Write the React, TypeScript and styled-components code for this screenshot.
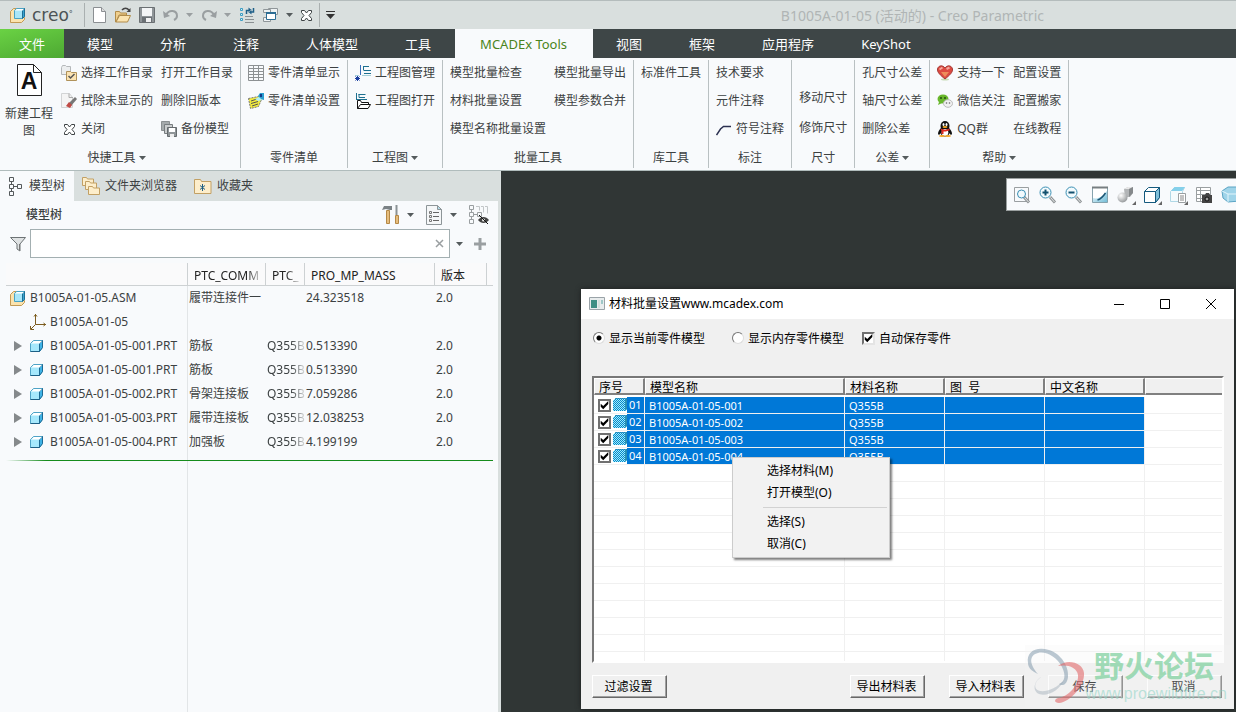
import React from "react";
import styled, { createGlobalStyle, css } from "styled-components";

const Global = createGlobalStyle`
  * { box-sizing: border-box; }
  body { margin: 0; }
  body, button, input, table {
    font-family: "Noto Sans", "Noto Sans CJK SC", sans-serif;
    font-size: 12px;
    line-height: 16px;
    color: #3c4142;
  }
  button { border: 0; padding: 0; background: none; cursor: pointer; white-space: nowrap; }
  svg { display: block; flex: none; }
`;

const Page = styled.div`
  display: flex;
  flex-direction: column;
  min-height: 100vh;
  overflow: hidden;
  background: #f8fafc;
`;

/* ---------- title bar ---------- */
const TitleBar = styled.header`
  display: flex;
  align-items: center;
  height: 29px;
  padding-left: 10px;
  border-top: 1px solid #b4bcbc;
  background: #d9dfde;
`;
const Brand = styled.div`
  display: flex;
  align-items: center;
  gap: 6px;
  width: 74px;
  font: 17px/20px "DejaVu Sans", sans-serif;
  color: #4c5355;
  & sup { margin-left: -6px; font-size: 8px; line-height: 16px; }
`;
const Rule = styled.span`
  width: 1px;
  height: 24px;
  background: #aab0b0;
`;
const QuickTools = styled.div`
  display: flex;
  align-items: center;
  gap: 8px;
  padding: 0 7px 0 6px;
`;
const IconButton = styled.button`
  display: flex;
  align-items: center;
  gap: 7px;
`;
const Title = styled.h1`
  margin: 1px 192px 0 auto;
  font-size: 14px;
  font-weight: 400;
  line-height: 18px;
  color: #b0b5b5;
  white-space: nowrap;
`;

/* ---------- ribbon ---------- */
const TabBar = styled.nav`
  display: flex;
  height: 29px;
  background: #3e4647;
`;
const RibbonTab = styled.button<{ $kind?: "file" | "active" }>`
  height: 29px;
  padding: 0 24px 0 23px;
  font-size: 13px;
  color: #fff;
  ${(p) => p.$kind === "file" && css`
    width: 64px;
    padding: 0;
    background: linear-gradient(165deg, #6ad244, #4da832);
  `}
  ${(p) => p.$kind === "active" && css`
    min-width: 138px;
    background: #f8fafc;
    color: #4a8420;
  `}
`;
const Ribbon = styled.section`
  display: flex;
  height: 113px;
  border-bottom: 1px solid #b0bcbc;
`;
const Group = styled.div<{ $flush?: boolean }>`
  display: flex;
  flex-direction: column;
  margin: 2px 0;
  padding: 0 7px 0 ${(p) => (p.$flush ? 0 : 7)}px;
  border-right: 1px solid #b9c0c2;
`;
const GroupBody = styled.div`
  display: flex;
  gap: 8px;
  height: 84px;
  margin-top: -1px;
`;
const Column = styled.div<{ $bottom?: boolean }>`
  display: flex;
  flex-direction: column;
  align-items: flex-start;
  justify-content: ${(p) => (p.$bottom ? "flex-end" : "flex-start")};
  & > button { height: ${(p) => (p.$bottom ? 30 : 28)}px; }
`;
const Command = styled.button`
  display: flex;
  align-items: center;
  gap: 4px;
`;
const BigCommand = styled.button`
  display: flex;
  flex-direction: column;
  align-items: center;
  gap: 9px;
  width: 58px;
  margin-right: -5px;
  padding: 5px 5px 0;
  line-height: 17px;
  white-space: normal;
`;
const GroupName = styled.div`
  display: flex;
  flex: 1;
  align-items: center;
  justify-content: center;
  gap: 3px;
  padding-top: 4px;
`;

/* ---------- model tree ---------- */
const Workspace = styled.main`
  display: flex;
  flex: 1;
`;
const TreePanel = styled.aside`
  display: flex;
  flex-direction: column;
  flex: 0 0 501px;
  border-right: 3px solid #d9dfde;
`;
const PanelTabs = styled.div`
  display: flex;
  height: 30px;
  background: #d9dfde;
`;
const PanelTab = styled.button<{ $active?: boolean }>`
  display: flex;
  align-items: center;
  gap: 5px;
  padding: 0 9px 0 8px;
  background: ${(p) => (p.$active ? "#f8fafc" : "transparent")};
`;
const PanelHead = styled.div`
  display: flex;
  align-items: center;
  height: 28px;
  padding: 0 9px 0 26px;
`;
const PanelTitle = styled.h2`
  flex: 1;
  margin: 0;
  font-size: 12px;
  font-weight: 500;
`;
const PanelTools = styled.div`
  display: flex;
  align-items: center;
  gap: 12px;
`;
const SearchRow = styled.div`
  display: flex;
  align-items: center;
  gap: 4px;
  padding: 0 12px 0 10px;
`;
const SearchBox = styled.div`
  display: flex;
  flex: 1;
  align-items: center;
  height: 29px;
  margin-right: 2px;
  padding-right: 5px;
  border: 1px solid #a3afb1;
  background: #fff;
  & input { flex: 1; min-width: 0; border: 0; outline: 0; background: none; }
`;
const SearchActions = styled.div`
  display: flex;
  align-items: center;
  gap: 11px;
`;
const TreeArea = styled.div`
  flex: 1;
  margin: 5px 5px 0 6px;
  background: linear-gradient(#e2e5e7, #e2e5e7) 181px 0 / 1px 100% no-repeat;
`;
const Tree = styled.table`
  width: 100%;
  table-layout: fixed;
  border-collapse: separate;
  border-spacing: 0;
  & th {
    height: 23px;
    padding: 4px 4px 0 6px;
    border-right: 1px solid #cdd1d3;
    border-bottom: 1px solid #cdd1d3;
    background: #fafafb;
    font-weight: 400;
    text-align: left;
    color: #222;
  }
  & th:last-child { border-right: 0; }
  & td { height: 24px; padding: 0 0 0 1px; white-space: nowrap; overflow: hidden; }
`;
const Fade = styled.div`
  overflow: hidden;
  mask-image: linear-gradient(to left, rgba(0, 0, 0, 0.15), #000 14px);
`;
const NodeCell = styled.div`
  display: flex;
  align-items: center;
  gap: 4px;
  padding-left: 3px;
`;
const Toggle = styled.button`
  display: flex;
  justify-content: center;
  width: 16px;
`;
const InsertLine = styled.div`
  height: 1px;
  margin-top: 6px;
  background: linear-gradient(to right, transparent, #168c1c 40px);
`;

/* ---------- graphics canvas ---------- */
const Canvas = styled.section`
  position: relative;
  display: flex;
  flex: 1;
  flex-direction: column;
  align-items: flex-end;
  min-width: 0;
  padding-top: 7px;
  background: #303635;
`;
const ViewBar = styled.div`
  display: flex;
  align-items: center;
  gap: 6px;
  width: 230px;
  height: 33px;
  padding-left: 5px;
  overflow: hidden;
  border: 1px solid #9aa0a0;
  border-right: 0;
  background: #f8fafc;
`;

/* ---------- dialog ---------- */
const Dialog = styled.div`
  position: absolute;
  top: 118px;
  right: 2px;
  bottom: 3px;
  left: 80px;
  display: flex;
  flex-direction: column;
  background: #f0f0f0;
  box-shadow: 0 0 5px #1c1f1f;
  color: #000;
  & button, & label, & table { color: #000; }
`;
const DialogTitle = styled.div`
  display: flex;
  align-items: center;
  gap: 4px;
  height: 30px;
  padding: 0 17px 0 8px;
  background: #fff;
  & strong { flex: 1; font-weight: 400; }
`;
const WindowButtons = styled.div`
  display: flex;
  gap: 34px;
`;
const DialogBody = styled.div`
  display: flex;
  flex: 1;
  flex-direction: column;
  padding: 9px 10px 11px 11px;
`;
const Options = styled.div`
  display: flex;
  align-items: center;
  gap: 27px;
  height: 20px;
  margin-bottom: 28px;
  padding-left: 1px;
`;
const Option = styled.label`
  display: flex;
  align-items: center;
  gap: 4px;
  & span { padding-top: 2px; }
`;
const Radio = styled.input`
  appearance: none;
  width: 12px;
  height: 12px;
  margin: 0;
  border: 1px solid;
  border-color: #777 #ddd #ddd #777;
  border-radius: 50%;
  background: #fff;
  &:checked { background: radial-gradient(circle, #000 2px, #fff 3px); }
`;
const Check = styled.input<{ $flat?: boolean }>`
  appearance: none;
  width: 13px;
  height: 13px;
  margin: 0 ${(p) => (p.$flat ? 2 : 0)}px 0 ${(p) => (p.$flat ? 0 : -9)}px;
  border: 2px solid;
  border-color: ${(p) => (p.$flat ? "#707070" : "#707070 #e4e4e4 #e4e4e4 #707070")};
  background: #fff;
  &:checked::before {
    content: "";
    display: block;
    width: 9px;
    height: 9px;
    background: #000;
    clip-path: polygon(8% 36%, 36% 60%, 92% 6%, 92% 40%, 36% 96%, 8% 70%);
  }
`;
const ListBox = styled.div`
  display: flex;
  flex: 1;
  flex-direction: column;
  border: 2px solid;
  border-color: #777 #fff #fff #777;
  background: #fff;
`;
const Parts = styled.table`
  width: 100%;
  table-layout: fixed;
  border-collapse: separate;
  border-spacing: 0;
  font-size: 11px;
  & th { height: 19px; padding: 0 0 2px; font-size: 12px; font-weight: 400; text-align: left; }
  & td {
    height: 17px;
    padding: 1px 4px 0;
    border-right: 1px solid #f0f0f0;
    border-bottom: 1px solid #f0f0f0;
    background: #0078d7;
    color: #fff;
    line-height: 14px;
    white-space: nowrap;
  }
  & td:first-child { padding: 0; background: #fff; }
  & td:last-child { border-right: 0; background: #fff; }
`;
const HeadCell = styled.div<{ $last?: boolean }>`
  height: 17px;
  padding-left: 4px;
  border: solid;
  border-width: 1px ${(p) => (p.$last ? 0 : 2)}px 2px 1px;
  border-color: #fff #808080 #808080 #fff;
  background: #f0f0f0;
  line-height: 17px;
  white-space: pre;
`;
const IndexCell = styled.div`
  display: flex;
  align-items: center;
  height: 16px;
  padding-left: 4px;
  & b { flex: 1; padding-left: 2px; background: #0078d7; font-weight: 400; line-height: 16px; }
`;
const GridFill = styled.div`
  flex: 1;
  background:
    linear-gradient(#f0f0f0, #f0f0f0) 50px 0 / 1px 100% no-repeat,
    linear-gradient(#f0f0f0, #f0f0f0) 250px 0 / 1px 100% no-repeat,
    linear-gradient(#f0f0f0, #f0f0f0) 350px 0 / 1px 100% no-repeat,
    linear-gradient(#f0f0f0, #f0f0f0) 450px 0 / 1px 100% no-repeat,
    linear-gradient(#f0f0f0, #f0f0f0) 550px 0 / 1px 100% no-repeat,
    repeating-linear-gradient(#fff 0 16px, #f0f0f0 16px 17px);
`;
const Actions = styled.div`
  display: flex;
  gap: 24px;
  margin-top: 12px;
  padding-right: 2px;
`;
const PushButton = styled.button<{ $left?: boolean }>`
  width: 75px;
  height: 23px;
  margin-right: ${(p) => (p.$left ? "auto" : 0)};
  padding-right: 2px;
  border: 1px solid;
  border-color: #fff #696969 #696969 #fff;
  background: #f0f0f0;
  box-shadow: inset -1px -1px #a0a0a0;
`;
const Menu = styled.div`
  position: absolute;
  top: 168px;
  left: 151px;
  display: flex;
  flex-direction: column;
  width: 158px;
  padding: 2px;
  border: 1px solid #ccc;
  background: #f2f2f2;
  box-shadow: 2px 2px 2px rgba(0, 0, 0, 0.5);
  & hr { width: 124px; height: 1px; margin: 3px 0 3px auto; border: 0; background: #d2d2d2; }
`;
const MenuItem = styled.button`
  height: 22px;
  padding-left: 32px;
  text-align: left;
`;
const Watermark = styled.div`
  position: absolute;
  right: 2px;
  bottom: 2px;
  display: flex;
  width: 207px;
  height: 62px;
  background: rgba(245, 246, 246, 0.3);
  pointer-events: none;
`;
const MarkText = styled.div`
  display: flex;
  flex: 1;
  flex-direction: column;
  align-items: flex-end;
  margin-left: -20px;
  padding-right: 5px;
  color: rgba(126, 208, 158, 0.72);
  font: 700 30px/38px "Noto Sans CJK SC", sans-serif;
  white-space: nowrap;
  & span:first-child { margin-right: 13px; }
  & span:last-child {
    color: rgba(150, 214, 200, 0.6);
    font: 16px/22px "Liberation Sans", sans-serif;
  }
`;

/* ---------- drawings ---------- */
type Kids = { children: React.ReactNode; w?: number; h?: number };
const Pic = ({ children, w = 16, h = 16 }: Kids) => (
  <svg width={w} height={h} viewBox={`0 0 ${w} ${h}`} fill="none" aria-hidden="true">{children}</svg>
);
const Caret = ({ c = "#555b5d" }: { c?: string }) => (
  <Pic w={7} h={4}><path d="M0 0h7L3.500 4z" fill={c} /></Pic>
);
const AsmIcon = () => (
  <Pic>
    <path d="M.5 4.500l3-3h4v9h7v2l-3 3h-11z" fill="#fbe3ae" stroke="#c29a55" />
    <path d="M4.500 3.500l2-2h8v8l-2 2h-8z" fill="#a9e6f8" stroke="#4aa3c4" />
    <path d="M12.500 3.500l2-2v8l-2 2z" fill="#3aa4d0" stroke="#1d6f96" />
    <path d="M5 3.500l2-1.500h7l-1.500 1.500z" fill="#fff" />
  </Pic>
);
const PartIcon = () => (
  <Pic w={14}>
    <path d="M.5 5.500l3-3h9v7l-3 4h-9z" fill="#a6e8fc" stroke="#4fa3c6" />
    <path d="M9.500 5.500l3-3v7l-3 4z" fill="#3fb3e6" stroke="#1d6a94" />
    <path d="M1 5.500l3-2.500h8l-2.500 2.500z" fill="#fff" />
    <path d="M.5 13.500h9" stroke="#1d5f85" />
  </Pic>
);
const NewIcon = () => (
  <Pic><path d="M2.500.5h8l4 4v11h-12z" fill="#fff" stroke="#8b8f92" /><path d="M10.500.5v4h4" fill="#ddd" stroke="#8b8f92" /></Pic>
);
const OpenIcon = () => (
  <Pic>
    <path d="M.5 4.500h4l1 1.500h6v2H4l-3 7H.5z" fill="#f0cf8d" stroke="#b18c4a" />
    <path d="M4.500 8.500h11l-3 6.500H1z" fill="#fbe4b0" stroke="#b18c4a" />
    <path d="M7 3c2-2.500 5-2.500 7 0" stroke="#444" strokeWidth="1.500" /><path d="M15.500 1v4h-4z" fill="#444" />
  </Pic>
);
const SaveIcon = () => (
  <Pic>
    <path d="M.5.5h15v15H.5z" fill="#8f9598" stroke="#6b7073" />
    <path d="M3 1h10v8H3z" fill="#f3f5f6" /><path d="M3 10h10v5H3z" fill="#6b7175" /><path d="M7 11h5v4H7z" fill="#f0f1f2" />
  </Pic>
);
const UndoIcon = ({ flip }: { flip?: boolean }) => (
  <Pic>
    <g transform={flip ? "matrix(-1 0 0 1 16 0)" : undefined}>
      <path d="M3 8c3-6 11-5 11 1 0 2-1 3-3 4" stroke="#9a9fa1" strokeWidth="2" />
      <path d="M0 4l1 7 6-2z" fill="#9a9fa1" />
    </g>
  </Pic>
);
const RegenIcon = () => (
  <Pic>
    <path d="M1.500 1.500h2v2h-2zM1.500 6.500h2v2h-2zM1.500 11.500h2v2h-2z" fill="#d8f2fb" stroke="#3b9cc2" />
    <path d="M6 9.500h8M6 12.500h9M6 15.500h9" stroke="#8a9093" />
    <path d="M7.500 7V3.500H10M14.500 1v4H12" stroke="#1e5f88" strokeWidth="1.500" />
    <path d="M9.500.5v5l3-2.500zM12.500 2.500v5l-3-2.500z" fill="#1e5f88" />
  </Pic>
);
const WindowsIcon = () => (
  <Pic>
    <path d="M5.500 1.500h9v6h-9z" fill="#eef2f3" stroke="#8f9699" />
    <path d="M.5 2.500h7v3h-7zM.5 10.500h7v4h-7z" fill="#eef2f3" stroke="#8f9699" />
    <path d="M3.500 5.500h9v7h-9z" fill="#fff" stroke="#2c6d94" /><path d="M3 6h10" stroke="#2c6d94" strokeWidth="2" />
  </Pic>
);
const CrossShape = () => (
  <path d="M.5.5h3l2 2.500 2-2.500h3v2L8 5.500l2.500 3v2h-3L5.500 8l-2 2.500h-3v-2L3 5.500.5 2.500z" fill="#fff" stroke="#3d4244" />
);
const CloseX = () => <Pic w={11} h={11}><CrossShape /></Pic>;
const SmallClose = () => <Pic><g transform="translate(3 3)"><CrossShape /></g></Pic>;
const DocA = () => (
  <Pic w={25} h={32}>
    <path d="M.5.5h16l8 8v23H.5z" fill="#fff" stroke="#222" />
    <path d="M16.500.5v8h8" stroke="#222" />
    <text x="12" y="25" textAnchor="middle" fontFamily="Liberation Sans" fontWeight="700" fontSize="23" fill="#111">A</text>
  </Pic>
);
const FolderCheck = () => (
  <Pic>
    <path d="M.5 2.500l1-2h3l1 1h4v8h-9z" fill="#eceeef" stroke="#b5b8ba" />
    <path d="M5.500 6.500h4l1 1h5v8h-10z" fill="#fbe3b2" stroke="#b0925a" /><path d="M7.500 11l2 2 4-4" stroke="#555" strokeWidth="1.500" />
  </Pic>
);
const Eraser = () => (
  <Pic>
    <path d="M.5.5h8l3 4v10H.5z" fill="#f4f4f4" stroke="#d2d4d5" /><path d="M8 .5v4h4" stroke="#aaa" />
    <path d="M14 4l2 2-6 7-3-2z" fill="#777" /><path d="M8 9l3 3-2 3-4-2z" fill="#c04a45" />
  </Pic>
);
const Backup = () => (
  <Pic>
    <path d="M.5.5h8v9h-8z" fill="#a5aaac" stroke="#8a8f91" /><path d="M3.500 3.500h8v9h-8z" fill="#c9cccd" stroke="#777c7f" />
    <path d="M6.500 6.500h9v9h-9z" fill="#8f9598" stroke="#666b6e" /><path d="M8 7h6v4H8z" fill="#fff" /><path d="M9 13h4v3H9z" fill="#eee" />
  </Pic>
);
const GridIcon = () => (
  <Pic><path d="M.5.5h15v15H.5zM.5 3.500h15M.5 6.500h15M.5 9.500h15M.5 12.500h15M5.500.5v15M10.500.5v15" stroke="#8d9193" /></Pic>
);
const ListSet = () => (
  <Pic>
    <path d="M.5 5.500l10-2 3 3-3 7-8 2z" fill="#f2ea3c" stroke="#777" strokeDasharray="2 1" />
    <path d="M3 8l6-2M3 10.500l7-2M4 13l6-2" stroke="#555" />
    <path d="M10 3l2-3h4v7l-4-1z" fill="#2a9fd0" /><path d="M12 1h2v3h-2z" fill="#123a86" /><path d="M7 6l4-2 3 3-4 1z" fill="#b3f0ee" />
  </Pic>
);
const DrawManage = () => (
  <Pic>
    <path d="M5.500 0v10" stroke="#3c6fb8" /><path d="M9 1.500h5M8.500 1v4.500M9 5.500h7M9 8.500h7" stroke="#1d7090" />
    <path d="M0 10.500h4M7 10.500h9" stroke="#a5cfd8" /><path d="M.5 11.500l4 4M4.500 11.500l-4 4M2.500 11v5M0 13.500h5" stroke="#1b3fa0" />
  </Pic>
);
const DrawOpen = () => (
  <Pic>
    <path d="M1.500 0v6M3.500 1.500h7M4 1v3.500h6M1 6.500h11" stroke="#1d7090" />
    <path d="M2.500 15.500V7.500h3l1 2h7v2M2.500 15.500l3-4h10l-2.500 4z" fill="#fff" stroke="#111" />
  </Pic>
);
const Leader = () => (
  <Pic><path d="M.5 14l4-6 3-2.500H15" stroke="#2b3050" strokeWidth="1.500" /></Pic>
);
const Heart = () => (
  <Pic>
    <ellipse cx="8" cy="14.500" rx="4" ry="1" fill="#c9dcb8" />
    <path d="M8 14C3 10 0 7 .5 4 1.500 0 6 0 8 3c2-3 6.500-3 7.500 1C16 7 13 10 8 14z" fill="#dc4a41" stroke="#a33a36" />
    <path d="M4 7h8l-4 5z" fill="#ee8d5b" /><path d="M2.500 4.500l3-2M9.500 4l3-1.500" stroke="#f5a79c" strokeWidth="2" />
  </Pic>
);
const WeChat = () => (
  <Pic>
    <ellipse cx="6" cy="6" rx="5.500" ry="4.500" fill="#69b72c" /><path d="M2 9l-1 3 4-2z" fill="#69b72c" />
    <circle cx="4" cy="5" r="1" fill="#264d12" /><circle cx="8" cy="5" r="1" fill="#264d12" />
    <ellipse cx="11" cy="10.500" rx="4.500" ry="3.800" fill="#f1f1f1" stroke="#bbb" />
    <circle cx="9.500" cy="10" r=".8" fill="#666" /><circle cx="12.500" cy="10" r=".8" fill="#666" />
  </Pic>
);
const Penguin = () => (
  <Pic>
    <ellipse cx="8" cy="5" rx="4.500" ry="5" fill="#111" />
    <path d="M4 7c-2 2-3 4-3 6l1 1 2-2h8l2 2 1-1c0-2-1-4-3-6z" fill="#111" />
    <ellipse cx="8" cy="11.500" rx="4.500" ry="4" fill="#111" /><ellipse cx="8" cy="11.500" rx="3.300" ry="3.500" fill="#fff" />
    <ellipse cx="6.500" cy="3.500" rx="1" ry="1.500" fill="#fff" /><ellipse cx="9.500" cy="3.500" rx="1" ry="1.500" fill="#fff" />
    <ellipse cx="8" cy="6" rx="2.500" ry="1" fill="#f5a623" /><path d="M3.500 7.500c3 1.500 6 1.500 9 0v2c-3 1-5 1-6 1V13H4.500v-3z" fill="#df2a20" />
    <ellipse cx="5" cy="15" rx="3" ry="1" fill="#f5a623" /><ellipse cx="11" cy="15" rx="3" ry="1" fill="#f5a623" />
  </Pic>
);
const TreeIcon = () => (
  <Pic h={20}>
    <path d="M1.500 1.500h4v4h-4zM1.500 8.500h4v4h-4zM1.500 15.500h4v4h-4zM9.500 8.500h4v4h-4zM3.500 5.500v3M3.500 12.500v3M5.500 10.500h4" stroke="#54595b" />
  </Pic>
);
const Folders = () => (
  <Pic w={18} h={20}>
    {[[0, 1], [3, 5], [6, 10]].map(([x, y]) => (
      <path key={x} transform={`translate(${x} ${y})`} d="M.5 8.500v-8h4l1 1.500h6v6.500z" fill="#fdeecb" stroke="#c2a064" />
    ))}
  </Pic>
);
const StarFolder = () => (
  <Pic w={18}>
    <path d="M.5 15.500V1.500h6l1 2h9.500v12z" fill="#fdeecb" stroke="#c2a064" />
    <path d="M8.500 6v7M6 7.500l5 4M11 7.500l-5 4" stroke="#1d5f85" />
  </Pic>
);
const Hammer = () => (
  <Pic w={18} h={20}>
    <path d="M4.500 5.500h3v13h-3z" fill="#e6bd7d" stroke="#b58845" /><path d="M0 5l2-4h8v4H8L4 4z" fill="#7b8285" />
    <path d="M14.500 0v10" stroke="#8b9295" strokeWidth="2" /><path d="M13.500 10.500h3v8h-3z" fill="#e6bd7d" stroke="#b58845" />
  </Pic>
);
const DocList = () => (
  <Pic w={17} h={20}>
    <path d="M.5.5h11l4 4v15H.5z" fill="#f5f7f8" stroke="#8d9598" /><path d="M11.500.5v4h4z" fill="#b4dcea" stroke="#8d9598" />
    <path d="M7 7.500h6M7 11.500h6M7 15.500h6" stroke="#666" /><path d="M3.500 6.500h2v2h-2zM3.500 10.500h2v2h-2zM3.500 14.500h2v2h-2z" stroke="#777" />
  </Pic>
);
const HideTree = () => (
  <Pic w={20} h={20}>
    <path d="M.5.5h4v4h-4zM.5 7.500h4v4h-4zM.5 14.500h4v4h-4zM8.500 7.500h4v4h-4zM2.500 5v2M2.500 12v2M5 9.500h3" stroke="#9a9fa1" />
    <path d="M7 1.500h3.500v4M12 1.500h2.500v6M16 1.500h2.500v7" stroke="#c2c6c8" />
    <path d="M9 15c3-4 8-4 11 0-3 4-8 4-11 0z" fill="#444" /><circle cx="14.500" cy="15" r="1.500" fill="#eee" /><path d="M10 10l9 9" stroke="#111" />
  </Pic>
);
const Funnel = () => (
  <Pic>
    <path d="M.5 1.500h15L10 8v7l-3-2V8z" fill="#dfe2e3" stroke="#6d7375" /><path d="M9 8h1v6H9z" fill="#777" />
  </Pic>
);
const AxisIcon = () => (
  <Pic><path d="M5.500 0v10.500H16M5.500 10.500L1 15M4 2.500l1.500-2 1.500 2M13.500 9l2 1.500-2 1.500M.5 12v3.500H4" stroke="#7d5c1f" /></Pic>
);
const Lens = ({ sign, box }: { sign?: "+" | "-"; box?: boolean }) => (
  <Pic w={20} h={20}>
    {box && <path d="M2.500 2.500h14v14h-14z" stroke="#9a9fa1" />}
    <path d="M12 12l5 5.500" stroke="#8f9496" strokeWidth="3" /><path d="M12.500 12.500l4 4.500" stroke="#e6e8e8" />
    <circle cx={box ? 9.5 : 7.5} cy={box ? 9 : 7.5} r={box ? 4 : 5.5} fill="#f2fafd" stroke="#3a8fb3" />
    {sign && <path d="M4.500 7.500h6" stroke="#12506f" strokeWidth="2" />}
    {sign === "+" && <path d="M7.500 4.500v6" stroke="#12506f" strokeWidth="2" />}
  </Pic>
);
const Flyout = () => <path d="M20 16v4h-4z" fill="#666" />;
const Repaint = () => (
  <Pic w={20} h={20}>
    <defs><linearGradient id="wipe" x1="0" y1="0" x2="1" y2="1"><stop offset=".3" stopColor="#d5eef6" /><stop offset="1" stopColor="#6fbbd6" /></linearGradient></defs>
    <path d="M2.500 2.500h15v15h-15z" fill="url(#wipe)" stroke="#86a3ae" /><path d="M3 3h14v3C14 9 10 15 3 13z" fill="#fff" /><path d="M7.500 15c4-1 6-4 8-7" stroke="#1b5574" strokeWidth="1.500" />
    <path d="M2 2.500h16" stroke="#777e81" strokeWidth="2" />
  </Pic>
);
const Shaded = () => (
  <Pic w={20} h={20}>
    <defs><radialGradient id="ball" cx=".35" cy=".3" r=".8"><stop offset="0" stopColor="#fff" /><stop offset="1" stopColor="#8b8f91" /></radialGradient></defs>
    <path d="M8 4l4-2h5v6l-3 4H9z" fill="#b2b5b7" /><path d="M8 4l4-2h5l-4 2z" fill="#e8e8e8" /><path d="M13 4l4-2v6l-4 4z" fill="#85898b" />
    <circle cx="6.500" cy="12.500" r="5" fill="url(#ball)" /><Flyout />
  </Pic>
);
const CubeView = () => (
  <Pic w={20} h={20}><path d="M2.500 6.500l4-4h11v10l-4 5h-11z" fill="#fff" stroke="#155a7e" /><path d="M13.500 6.500l4-4v10l-4 5z" fill="#7ebed8" stroke="#155a7e" /><path d="M2.500 6.500h11v11" stroke="#155a7e" /><Flyout /></Pic>
);
const Saved = () => (
  <Pic w={20} h={20}><path d="M2.500 6.500l4-4h10l-2 4v10h-12z" fill="#f4fbfd" stroke="#b0d8e6" /><path d="M3 6l3.500-4H17l-3 4z" fill="#85d0ea" /><path d="M10.500 8.500h7v9h-7z" fill="#fff" stroke="#9a9fa1" /><path d="M12 11h4M12 13h4M12 15h4" stroke="#888" /><Flyout /></Pic>
);
const Snapshot = () => (
  <Pic w={20} h={20}><path d="M2.500 2.500h14v14h-14zM2.500 5.500h14M2.500 9.500h14M2.500 13.500h14M6.500 2.500v14" fill="#fff" stroke="#9a9fa1" /><path d="M8 10h3l1-2h3l1 2h2v8H8z" fill="#444" /><circle cx="13" cy="14" r="2" fill="#999" stroke="#111" /></Pic>
);
const Perspective = () => (
  <Pic w={20} h={20}><path d="M2 6l6-4h12v14L8 17l-5-4z" fill="#9fd4e9" stroke="#5aa4c4" /><path d="M2 6l6 3h12M8 9v8" stroke="#e2f5fb" /></Pic>
);
const AppIcon = () => (
  <Pic><path d="M.5 1.500h15v12H.5z" fill="#e8eced" stroke="#9aa3a8" /><path d="M2 4h6v8H2z" fill="#3f8f84" /><path d="M9 4h2v8H9z" fill="#d5e0dd" /><path d="M12 4h2v4h-2z" fill="#9ec7c7" /></Pic>
);
const HatchCube = () => (
  <Pic w={14}>
    <defs>
      <pattern id="hatch" width="2" height="2" patternUnits="userSpaceOnUse">
        <path d="M0 0h2v2H0z" fill="#9df0fa" /><path d="M0 0h1v1H0zM1 1h1v1H1z" fill="#0a84cc" />
      </pattern>
    </defs>
    <path d="M0 3l2-2h12v11l-2 2H0z" fill="url(#hatch)" shapeRendering="crispEdges" />
    <path d="M12 3l2-2v11l-2 2z" fill="#2a90b0" /><path d="M2 1.500h12" stroke="#4a9fb8" strokeDasharray="1 1" />
  </Pic>
);
const Logo = () => (
  <Pic w={74} h={62}>
    <path fillRule="evenodd" fill="rgba(120,145,165,.5)" d="M3 18C1 6 12 1 24 5c12 4 20 16 19 27-1 9-7 9-9 7 6-2 7-9 3-17C32 12 21 6 13 8 4 10 4 19 13 29 6 26 3 22 3 18z" />
    <path fillRule="evenodd" fill="rgba(226,100,102,.58)" d="M33 21c10-8 25-3 26 7 1 13-14 29-25 30-5 0-5-4-1-5 10-1 21-13 20-23-1-8-11-11-20-9z" />
    <path fill="rgba(150,165,178,.4)" d="M18 31c-8 4-11 13-3 15 7 1 17-3 24-11-4 10-16 17-25 14-8-4-4-15 4-18z" />
  </Pic>
);

/* ---------- data ---------- */
const tabs = ["模型", "分析", "注释", "人体模型", "工具", "MCADEx Tools", "视图", "框架", "应用程序", "KeyShot"];

type Cmd = [string, (() => React.ReactElement)?];
type GroupData = { name: string; more?: boolean; bottom?: boolean; cols: Cmd[][] };
const groups: GroupData[] = [
  { name: "快捷工具", more: true, cols: [
    [["选择工作目录", FolderCheck], ["拭除未显示的", Eraser], ["关闭", SmallClose]],
    [["打开工作目录"], ["删除旧版本"], ["备份模型", Backup]],
  ] },
  { name: "零件清单", cols: [[["零件清单显示", GridIcon], ["零件清单设置", ListSet]]] },
  { name: "工程图", more: true, cols: [[["工程图管理", DrawManage], ["工程图打开", DrawOpen]]] },
  { name: "批量工具", cols: [[["模型批量检查"], ["材料批量设置"], ["模型名称批量设置"]], [["模型批量导出"], ["模型参数合并"]]] },
  { name: "库工具", cols: [[["标准件工具"]]] },
  { name: "标注", cols: [[["技术要求"], ["元件注释"], ["符号注释", Leader]]] },
  { name: "尺寸", bottom: true, cols: [[["移动尺寸"], ["修饰尺寸"]]] },
  { name: "公差", more: true, cols: [[["孔尺寸公差"], ["轴尺寸公差"], ["删除公差"]]] },
  { name: "帮助", more: true, cols: [
    [["支持一下", Heart], ["微信关注", WeChat], ["QQ群", Penguin]],
    [["配置设置"], ["配置搬家"], ["在线教程"]],
  ] },
];

const nodes = [
  ["asm", "B1005A-01-05.ASM", "履带连接件一", "", "24.323518", "2.0"],
  ["csys", "B1005A-01-05", "", "", "", ""],
  ["prt", "B1005A-01-05-001.PRT", "筋板", "Q355B", "0.513390", "2.0"],
  ["prt", "B1005A-01-05-001.PRT", "筋板", "Q355B", "0.513390", "2.0"],
  ["prt", "B1005A-01-05-002.PRT", "骨架连接板", "Q355B", "7.059286", "2.0"],
  ["prt", "B1005A-01-05-003.PRT", "履带连接板", "Q355B", "12.038253", "2.0"],
  ["prt", "B1005A-01-05-004.PRT", "加强板", "Q355B", "4.199199", "2.0"],
];

const NodeIcon = styled.span`
  display: flex;
  width: 16px;
`;
const TreeNode = ({ kind, label }: { kind: string; label: string }) => (
  <NodeCell>
    {kind === "prt" && (
      <Toggle aria-label={`展开 ${label}`}><Pic w={8} h={10}><path d="M0 0l8 5-8 5z" fill="#85898b" /></Pic></Toggle>
    )}
    {kind === "csys" && <Toggle as="span" />}
    <NodeIcon>{kind === "asm" ? <AsmIcon /> : kind === "csys" ? <AxisIcon /> : <PartIcon />}</NodeIcon>
    {label}
  </NodeCell>
);

const MaterialDialog = () => (
  <Dialog role="dialog" aria-labelledby="dialog-title">
    <DialogTitle>
      <AppIcon />
      <strong id="dialog-title">材料批量设置www.mcadex.com</strong>
      <WindowButtons>
        <IconButton aria-label="最小化"><Pic w={12} h={12}><path d="M1 6.500h10" stroke="#000" /></Pic></IconButton>
        <IconButton aria-label="最大化"><Pic w={12} h={12}><path d="M1.500 1.500h9v9h-9z" stroke="#000" /></Pic></IconButton>
        <IconButton aria-label="关闭"><Pic w={12} h={12}><path d="M1 1l10 10M11 1L1 11" stroke="#000" /></Pic></IconButton>
      </WindowButtons>
    </DialogTitle>
    <DialogBody>
      <Options>
        <Option><Radio type="radio" name="scope" defaultChecked /><span>显示当前零件模型</span></Option>
        <Option><Radio type="radio" name="scope" /><span>显示内存零件模型</span></Option>
        <Option><Check type="checkbox" defaultChecked /><span>自动保存零件</span></Option>
      </Options>
      <ListBox>
        <Parts>
          <colgroup>
            <col style={{ width: 51 }} /><col style={{ width: 200 }} /><col style={{ width: 100 }} />
            <col style={{ width: 100 }} /><col style={{ width: 100 }} /><col />
          </colgroup>
          <thead>
            <tr>
              {["序号", "模型名称", "材料名称", "图  号", "中文名称"].map((h) => <th key={h}><HeadCell>{h}</HeadCell></th>)}
              <th><HeadCell $last /></th>
            </tr>
          </thead>
          <tbody>
            {["01", "02", "03", "04"].map((n) => (
              <tr key={n}>
                <td>
                  <IndexCell>
                    <Check $flat type="checkbox" defaultChecked aria-label={n} />
                    <HatchCube />
                    <b>{n}</b>
                  </IndexCell>
                </td>
                <td>B1005A-01-05-0{n}</td><td>Q355B</td><td /><td /><td />
              </tr>
            ))}
          </tbody>
        </Parts>
        <GridFill />
      </ListBox>
      <Actions>
        <PushButton $left>过滤设置</PushButton>
        <PushButton>导出材料表</PushButton>
        <PushButton>导入材料表</PushButton>
        <PushButton>保存</PushButton>
        <PushButton>取消</PushButton>
      </Actions>
    </DialogBody>
    <Watermark><Logo /><MarkText><span>野火论坛</span><span>www.proewildfire.cn</span></MarkText></Watermark>
    <Menu role="menu">
      <MenuItem role="menuitem">选择材料(M)</MenuItem>
      <MenuItem role="menuitem">打开模型(O)</MenuItem>
      <hr />
      <MenuItem role="menuitem">选择(S)</MenuItem>
      <MenuItem role="menuitem">取消(C)</MenuItem>
    </Menu>
  </Dialog>
);

export default function App() {
  return (
    <Page>
      <Global />
      <TitleBar>
        <Brand><AsmIcon /><span>creo</span><sup>°</sup></Brand>
        <Rule />
        <QuickTools>
          <IconButton aria-label="新建"><NewIcon /></IconButton>
          <IconButton aria-label="打开"><OpenIcon /></IconButton>
          <IconButton aria-label="保存"><SaveIcon /></IconButton>
          <IconButton aria-label="撤销"><UndoIcon /><Caret c="#9a9fa1" /></IconButton>
          <IconButton aria-label="重做"><UndoIcon flip /><Caret c="#9a9fa1" /></IconButton>
          <IconButton aria-label="重新生成"><RegenIcon /></IconButton>
          <IconButton aria-label="窗口"><WindowsIcon /><Caret /></IconButton>
          <IconButton aria-label="关闭"><CloseX /></IconButton>
        </QuickTools>
        <Rule />
        <QuickTools>
          <IconButton aria-label="自定义"><Pic w={9} h={8}><path d="M0 .5h9" stroke="#333" /><path d="M0 3h9L4.500 8z" fill="#333" /></Pic></IconButton>
        </QuickTools>
        <Title>B1005A-01-05 (活动的) - Creo Parametric</Title>
      </TitleBar>
      <TabBar>
        <RibbonTab $kind="file">文件</RibbonTab>
        {tabs.map((t) => <RibbonTab key={t} $kind={t === "MCADEx Tools" ? "active" : undefined}>{t}</RibbonTab>)}
      </TabBar>
      <Ribbon>
        {groups.map((g, i) => (
          <Group key={g.name} $flush={i === 0}>
            <GroupBody>
              {i === 0 && <BigCommand><DocA />新建工程图</BigCommand>}
              {g.cols.map((col, c) => (
                <Column key={c} $bottom={g.bottom}>
                  {col.map(([label, Icon]) => <Command key={label}>{Icon && <Icon />}{label}</Command>)}
                </Column>
              ))}
            </GroupBody>
            <GroupName>{g.name}{g.more && <Caret />}</GroupName>
          </Group>
        ))}
      </Ribbon>
      <Workspace>
        <TreePanel>
          <PanelTabs>
            <PanelTab $active><TreeIcon />模型树</PanelTab>
            <PanelTab><Folders />文件夹浏览器</PanelTab>
            <PanelTab><StarFolder />收藏夹</PanelTab>
          </PanelTabs>
          <PanelHead>
            <PanelTitle>模型树</PanelTitle>
            <PanelTools>
              <IconButton aria-label="设置"><Hammer /><Caret /></IconButton>
              <IconButton aria-label="显示"><DocList /><Caret /></IconButton>
              <IconButton aria-label="隐藏"><HideTree /></IconButton>
            </PanelTools>
          </PanelHead>
          <SearchRow>
            <Funnel />
            <SearchBox>
              <input type="text" aria-label="搜索模型树" />
              <IconButton aria-label="清除"><Pic w={9} h={9}><path d="M1 1l7 7M8 1L1 8" stroke="#9a9fa1" strokeWidth="1.500" /></Pic></IconButton>
            </SearchBox>
            <SearchActions>
              <IconButton aria-label="搜索选项"><Caret /></IconButton>
              <IconButton aria-label="添加"><Pic w={12} h={12}><path d="M6 0v12M0 6h12" stroke="#9a9fa1" strokeWidth="3" /></Pic></IconButton>
            </SearchActions>
          </SearchRow>
          <TreeArea>
            <Tree>
              <colgroup>
                <col style={{ width: 182 }} /><col style={{ width: 78 }} /><col style={{ width: 39 }} />
                <col style={{ width: 130 }} /><col style={{ width: 52 }} /><col />
              </colgroup>
              <thead>
                <tr>
                  <th /><th><Fade>PTC_COMM</Fade></th><th><Fade>PTC_</Fade></th><th>PRO_MP_MASS</th><th>版本</th><th />
                </tr>
              </thead>
              <tbody>
                {nodes.map(([kind, label, name, mat, mass, ver], i) => (
                  <tr key={i}>
                    <td><TreeNode kind={kind} label={label} /></td>
                    <td>{name}</td><td><Fade>{mat}</Fade></td><td>{mass}</td><td>{ver}</td><td />
                  </tr>
                ))}
              </tbody>
            </Tree>
            <InsertLine />
          </TreeArea>
        </TreePanel>
        <Canvas>
          <ViewBar>
            <IconButton aria-label="重新调整"><Lens box /></IconButton>
            <IconButton aria-label="放大"><Lens sign="+" /></IconButton>
            <IconButton aria-label="缩小"><Lens sign="-" /></IconButton>
            <IconButton aria-label="重画"><Repaint /></IconButton>
            <IconButton aria-label="渲染"><Shaded /></IconButton>
            <IconButton aria-label="显示样式"><CubeView /></IconButton>
            <IconButton aria-label="已保存方向"><Saved /></IconButton>
            <IconButton aria-label="视图管理器"><Snapshot /></IconButton>
            <IconButton aria-label="透视图"><Perspective /></IconButton>
          </ViewBar>
          <MaterialDialog />
        </Canvas>
      </Workspace>
    </Page>
  );
}
